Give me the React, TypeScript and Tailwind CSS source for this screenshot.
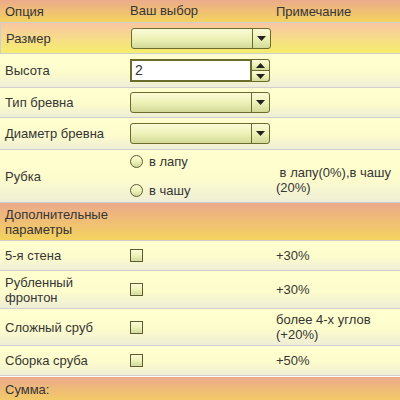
import React from "react";

const rowBg = "bg-[linear-gradient(to_bottom,#ffffd0,#fdfccc_55%,#eeeed6)]";
const hdrBg = "bg-[linear-gradient(to_bottom,#ebaa8c,#f4d35e)]";
const selBg = "bg-[linear-gradient(to_bottom,#fbfbd6,#eef2b8_50%,#d2da98)]";

function Arrow({ up = false }: { up?: boolean }) {
  return (
    <svg width="9" height="5" viewBox="0 0 9 5">
      {up ? <polygon points="4.5,0 9,5 0,5" fill="#222" /> : <polygon points="0,0 9,0 4.5,5" fill="#222" />}
    </svg>
  );
}

function Select() {
  return (
    <div className={`w-[140px] h-[21px] border border-[#6b6b2c] rounded-[3px] flex ${selBg}`}>
      <div className="flex-1" />
      <div className="w-[18px] border-l border-[#6b6b2c] flex items-center justify-center">
        <Arrow />
      </div>
    </div>
  );
}

function Check() {
  return <div className={`w-[13px] h-[13px] border border-[#5c5c30] ${selBg} shadow-[inset_0_0_1px_#fff]`} />;
}

function Radio({ label }: { label: string }) {
  return (
    <div className="flex items-center gap-[6px]">
      <div className={`w-[13px] h-[13px] rounded-full border border-[#5c5c30] ${selBg}`} />
      <span>{label}</span>
    </div>
  );
}

function Row({ h, bg = rowBg, c1, c2, c3 }: { h: string; bg?: string; c1: React.ReactNode; c2?: React.ReactNode; c3?: React.ReactNode }) {
  return (
    <div className={`grid grid-cols-[130px_146px_1fr] border-b border-[#cfcfcf] ${h} ${bg}`}>
      <div className="flex items-center pl-[5px] leading-[15px]">{c1}</div>
      <div className="flex items-center">{c2}</div>
      <div className="flex items-center leading-[15px] pr-2">{c3}</div>
    </div>
  );
}

export default function App() {
  return (
    <div className="w-[400px] h-[400px] overflow-hidden bg-white text-[13px] text-[#353535]" style={{ fontFamily: '"Liberation Sans", Arial, sans-serif' }}>
      <Row h="h-[23px]" bg={hdrBg} c1="Опция" c2="Ваш выбор" c3="Примечание" />
      <Row h="h-[31px]" bg="bg-[linear-gradient(to_bottom,#f8c6a2,#f7dc8a_50%,#f5ee6c)] border-l border-[#cfcfcf]" c1="Размер" c2={<Select />} />
      <Row
        h="h-[34px]"
        c1="Высота"
        c2={
          <div className="w-[140px] h-[23px] flex">
            <div className="flex-1 bg-white border-2 border-[#6b6b2c] flex items-center pl-[3px] text-[14px]">2</div>
            <div className="w-[18px] flex flex-col">
              <div className={`flex-1 border border-[#6b6b2c] border-l-0 rounded-tr-[3px] flex items-center justify-center ${selBg}`}>
                <Arrow up />
              </div>
              <div className={`flex-1 border border-[#6b6b2c] border-t-0 border-l-0 rounded-br-[3px] flex items-center justify-center ${selBg}`}>
                <Arrow />
              </div>
            </div>
          </div>
        }
      />
      <Row h="h-[30px]" c1="Тип бревна" c2={<Select />} />
      <Row h="h-[32px]" c1="Диаметр бревна" c2={<Select />} />
      <Row
        h="h-[53px]"
        c1="Рубка"
        c2={
          <div className="flex flex-col gap-[10px]">
            <Radio label="в лапу" />
            <Radio label="в чашу" />
          </div>
        }
        c3={<span className="pt-[8px]">&nbsp;в лапу(0%),в чашу (20%)</span>}
      />
      <Row h="h-[38px]" bg={hdrBg} c1={<span>Дополнительные<br />параметры</span>} />
      <Row h="h-[30px]" c1="5-я стена" c2={<Check />} c3="+30%" />
      <Row h="h-[38px]" c1={<span>Рубленный<br />фронтон</span>} c2={<Check />} c3="+30%" />
      <Row h="h-[37px]" c1="Сложный сруб" c2={<Check />} c3={<span>более 4-х углов<br />(+20%)</span>} />
      <Row h="h-[30px]" c1="Сборка сруба" c2={<Check />} c3="+50%" />
      <div className={`h-[30px] border-t border-white ${hdrBg} flex items-start pt-[3px] pl-[5px]`}>Сумма:</div>
    </div>
  );
}
